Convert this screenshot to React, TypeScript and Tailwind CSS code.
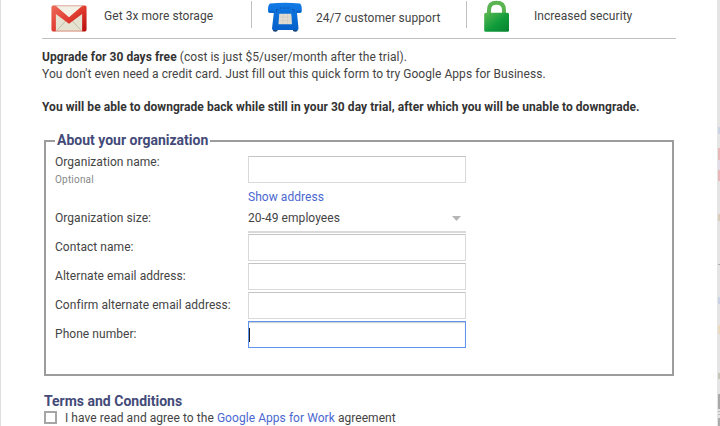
import type { ReactNode } from "react";

function GmailIcon() {
  return (
    <svg className="block h-[27px] w-[36px]" viewBox="0 0 37 27" preserveAspectRatio="none">
      <defs>
        <linearGradient id="mailRed" x1="0" y1="0" x2="1" y2="1">
          <stop offset="0" stopColor="#ee6a5a" />
          <stop offset=".5" stopColor="#e03c30" />
          <stop offset="1" stopColor="#b80c0c" />
        </linearGradient>
      </defs>
      <rect x=".5" y=".5" width="36" height="26" rx="1.8" fill="#e6e2d2" />
      <path d="M6 25.5 15.5 15.5M31 25.5 21.5 15.5" stroke="#c4bda8" fill="none" />
      <path d="M4 1h29L18.500 13.500Z" fill="#f3f0e6" />
      <path d="M.5 2.300Q.5.5 2.300.5H4.500L18.500 12.300 32.500.5h2.200q1.800 0 1.800 1.800v22.400q0 1.800-1.800 1.800H32V9L18.500 18.800 5 9v17.500H2.300Q.5 26.500.5 24.700Z" fill="url(#mailRed)" />
      <path d="M3 .8H34" stroke="#dd9a8c" strokeWidth=".8" />
      <path d="M5 26H32" stroke="#dd8f80" />
    </svg>
  );
}

function PhoneIcon() {
  return (
    <svg className="block h-[30px] w-[36px]" viewBox="0 0 36 30">
      <defs>
        <linearGradient id="phoneBlue" x1="0" y1="0" x2="0" y2="1">
          <stop offset="0" stopColor="#127be6" />
          <stop offset="1" stopColor="#045fc9" />
        </linearGradient>
      </defs>
      <path d="M6 27h4.500v2q-2.200 1.500-4.500 0ZM26 27h4.500v2q-2.200 1.500-4.500 0Z" fill="#17457c" />
      <path d="M3 1.500Q18-.2 33 1.500q2 1.500 1.800 7.500-.1 2-1.500 2H30l1.500 15.500q0 1.500-1.500 1.500H6.500Q5 28 5 26.500L6.800 11H2.500Q1.200 11 1 9 .8 3 3 1.500Z" fill="url(#phoneBlue)" />
      <path d="M2 9.500Q5 8.800 7.500 10M34 9.500Q31 8.800 29 10M9.500 10.500v-3h2M27 10.500v-3h-2" stroke="#0554ad" strokeWidth=".8" fill="none" />
      <path d="M13 6h11" stroke="#0756b2" strokeWidth="1" strokeDasharray="2 1.500" />
      <path d="M12.200 11.700h12l.8 10.500H11.500Z" fill="#e0dcd0" />
      <path d="M16 12v10M20.500 12v10M12 15h13M12 18.500h13" stroke="#cbcbc6" strokeWidth=".6" />
    </svg>
  );
}

function LockIcon() {
  return (
    <svg className="block h-[32px] w-[26px]" viewBox="0 0 26 32">
      <defs>
        <linearGradient id="lockGreen" x1="0" y1="0" x2="1" y2="1">
          <stop offset="0" stopColor="#5cb950" />
          <stop offset=".55" stopColor="#109b3b" />
          <stop offset="1" stopColor="#07822f" />
        </linearGradient>
      </defs>
      <path d="M5 14V10q0-7.200 7.500-7.200t7.500 7.200v4" stroke="#58b350" strokeWidth="4" fill="none" />
      <rect x=".2" y="12.700" width="24.800" height="19" rx="1.500" fill="url(#lockGreen)" />
    </svg>
  );
}

function Row({ label, children }: { label: string; children: ReactNode }) {
  return (
    <div className="flex h-[29px]">
      <div className="w-[193px] shrink-0 pt-[4px] leading-[18px]">{label}</div>
      {children}
    </div>
  );
}

const field = "h-[27px] w-[218px] border border-[#d9d9d9] border-t-[#c4c4c4] bg-white";

export default function App() {
  return (
    <div className="flex h-[426px] w-[720px] overflow-hidden bg-white font-['Roboto',sans-serif] text-[12px] tracking-[0.055px] text-[#444]">
      <div className="w-px shrink-0 bg-[#dedede]" />
      <main className="w-[716px] shrink-0 pl-[41px]">
        <header className="flex h-[39px] w-[634px] border-b border-[#c0c0c0]">
          <div className="mb-[10px] mt-px flex w-[210px] border-r border-[#c0c0c0]">
            <div className="ml-[9px] mt-[4px]"><GmailIcon /></div>
            <span className="ml-[17px] mt-[6px] leading-[18px]">Get 3x more storage</span>
          </div>
          <div className="mb-[10px] mt-px flex w-[215px] border-r border-[#c0c0c0]">
            <div className="ml-[15px] mt-[1px]"><PhoneIcon /></div>
            <span className="ml-[13px] mt-[8px] leading-[18px]">24/7 customer support</span>
          </div>
          <div className="flex">
            <div className="ml-[17px]"><LockIcon /></div>
            <span className="ml-[24px] mt-[7px] leading-[18px]">Increased security</span>
          </div>
        </header>

        <p className="mt-[10px] leading-[17px]">
          <b className="text-[#333]">Upgrade for 30 days free</b> (cost is just $5/user/month after the trial).
          <br />
          You don't even need a credit card. Just fill out this quick form to try Google Apps for Business.
        </p>
        <p className="mt-[16px] font-bold leading-[17px] text-[#333]">
          You will be able to downgrade back while still in your 30 day trial, after which you will be unable to downgrade.
        </p>

        <fieldset className="ml-[2px] mt-[16px] h-[244px] w-[630px] border-2 border-[#9c9c9c] pl-[9px]">
          <legend className="h-[18px] px-[2px] text-[14px] font-bold leading-[16px] tracking-normal text-[#434a78]">About your organization</legend>
          <div className="flex h-[55px] pt-[3px]">
            <div className="w-[193px] leading-[18px]">
              <div>Organization name:</div>
              <div className="text-[10px] leading-[17px] tracking-[0.2px] text-[#888]">Optional</div>
            </div>
            <div>
              <div className={`${field} mt-[3px]`} />
              <a className="mt-[5px] block leading-[18px] text-[#4a67cf]">Show address</a>
            </div>
          </div>
          <Row label="Organization size:">
            <div className="flex h-[28px] w-[218px] items-start justify-between border-b-2 border-[#d9d9d9] pr-[5px]">
              <span className="mt-[4px] leading-[18px]">20-49 employees</span>
              <svg className="mt-[11px] h-[5px] w-[9px]" viewBox="0 0 9 5"><path d="M0 0h9L4.500 5Z" fill="#b5b5b5" /></svg>
            </div>
          </Row>
          <Row label="Contact name:"><div className={field} /></Row>
          <Row label="Alternate email address:"><div className={field} /></Row>
          <Row label="Confirm alternate email address:"><div className={field} /></Row>
          <Row label="Phone number:">
            <div className="flex h-[27px] w-[218px] items-center border border-[#5f94ee] shadow-[inset_0_1px_1px_#ccc]">
              <div className="h-[14px] w-px bg-[#222]" />
            </div>
          </Row>
        </fieldset>

        <h2 className="ml-[2px] mt-[16px] text-[14px] font-bold leading-[18px] tracking-normal text-[#434a78]">Terms and Conditions</h2>
        <div className="ml-[2px] flex h-[16px]">
          <div className="mt-[1px] h-[13px] w-[13px] border-2 border-[#a6a6a6]" />
          <span className="ml-[8px] leading-[16px]">I have read and agree to the <a className="text-[#4a67cf]">Google Apps for Work</a> agreement</span>
        </div>
      </main>
      <aside className="flex w-[3px] shrink-0 flex-col bg-[#e4e4e4] pl-px">
        <div className="mt-[127px] h-[7px] bg-[#cbd2e2]" />
        <div className="mt-[14px] h-[12px] bg-[#e9b7b7]" />
        <div className="h-[10px] bg-[#e3dbe6]" />
        <div className="h-[11px] bg-[#e9b7b7]" />
        <div className="mt-[33px] h-[7px] bg-[#d8ccb9]" />
        <div className="mt-[43px] h-px bg-[#aaa]" />
        <div className="mt-[32px] h-[7px] bg-[#c8d2e2]" />
        <div className="mt-[21px] h-[9px] bg-[#e9dabd]" />
        <div className="mt-[39px] h-[6px] bg-[#c7c5b8]" />
        <div className="mt-[15px] h-[15px] bg-[#a8a8a8]" />
        <div className="mt-[2px] h-px bg-[#bbb]" />
        <div className="mt-[2px] h-px bg-[#bbb]" />
        <div className="mt-[3px] h-[8px] bg-[#acacac]" />
      </aside>
    </div>
  );
}
